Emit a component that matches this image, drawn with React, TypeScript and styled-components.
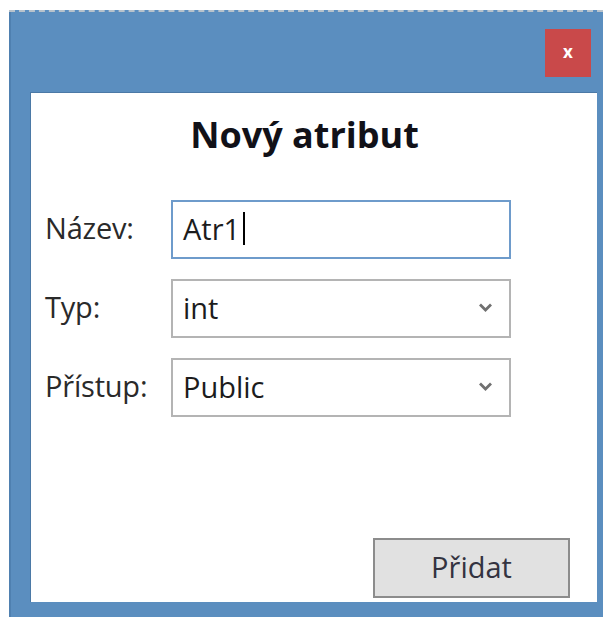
import React from "react";
import styled, { createGlobalStyle } from "styled-components";

const GlobalStyle = createGlobalStyle`
  html, body {
    margin: 0;
    padding: 0;
    background: #ffffff;
  }
  body {
    font-family: "Open Sans", "Noto Sans", sans-serif;
    width: 603px;
    height: 617px;
    overflow: hidden;
  }
`;

const Page = styled.div`
  width: 603px;
  height: 617px;
  padding-top: 10px;
  box-sizing: border-box;
`;

const Window = styled.div`
  margin-left: 9px;
  width: 594px;
  height: 607px;
  box-sizing: border-box;
  background: #5b8ebf;
  border-top: 2px dashed #b9c3cc;
  box-shadow: inset 2px 0 0 #4f80b0;
  display: flex;
  flex-direction: column;
  padding: 0 6px 15px 21px;
`;

const TitleBar = styled.div`
  height: 80px;
  display: flex;
  align-items: flex-start;
  justify-content: flex-end;
  padding-top: 17px;
  padding-right: 6px;
  box-sizing: border-box;
`;

const CloseButton = styled.button`
  width: 46px;
  height: 48px;
  border: none;
  background: #c9494a;
  color: #ffffff;
  font-family: "Open Sans", sans-serif;
  font-weight: 700;
  font-size: 17px;
  line-height: 1;
  padding: 0 0 3px;
  cursor: pointer;
`;

const Panel = styled.div`
  flex: 1;
  background: #ffffff;
  border-top: 1px solid #4b79a6;
  border-left: 1px solid #4b79a6;
  display: flex;
  flex-direction: column;
  box-sizing: border-box;
  padding: 18px 27px 4px 14px;
`;

const Heading = styled.h1`
  margin: 0 0 41px;
  font-family: "Open Sans", sans-serif;
  font-weight: 700;
  font-size: 36px;
  line-height: 48px;
  color: #111118;
  text-align: center;
  padding-right: 6px;
`;

const Form = styled.div`
  display: grid;
  grid-template-columns: 126px 340px;
  grid-auto-rows: 59px;
  row-gap: 20px;
  align-items: center;
`;

const Label = styled.label`
  font-size: 29px;
  color: #2a2a2a;
  letter-spacing: -0.2px;
  padding-bottom: 4px;
`;

const Field = styled.div<{ $focused?: boolean }>`
  height: 59px;
  box-sizing: border-box;
  border: 2px solid ${(p) => (p.$focused ? "#6e9bcb" : "#b4b4b4")};
  background: #ffffff;
  display: flex;
  align-items: center;
  padding: 0 16px 3px 10px;
  font-size: 29px;
  color: #1c1c1c;
`;

const Value = styled.span`
  flex: 1;
  display: flex;
  align-items: center;
`;

const Caret = styled.span`
  display: inline-block;
  width: 2px;
  height: 33px;
  background: #000000;
  margin-left: 3px;
`;

const Footer = styled.div`
  margin-top: auto;
  display: flex;
  justify-content: flex-end;
`;

const SubmitButton = styled.button`
  width: 197px;
  height: 60px;
  box-sizing: border-box;
  border: 2px solid #8c8c8c;
  background: #e1e1e1;
  font-family: "Open Sans", sans-serif;
  font-size: 29px;
  color: #333340;
  padding: 0 0 4px;
`;

const Chevron = () => (
  <svg width="15" height="11" viewBox="0 0 15 11">
    <path d="M2 2.5 L7.5 8 L13 2.5" fill="none" stroke="#707070" strokeWidth="2.8" />
  </svg>
);

export default function App() {
  return (
    <>
      <GlobalStyle />
      <Page>
        <Window>
          <TitleBar>
            <CloseButton aria-label="Zavřít">x</CloseButton>
          </TitleBar>
          <Panel>
            <Heading>Nový atribut</Heading>
            <Form>
              <Label>Název:</Label>
              <Field $focused>
                <Value>
                  Atr1
                  <Caret />
                </Value>
              </Field>
              <Label>Typ:</Label>
              <Field>
                <Value>int</Value>
                <Chevron />
              </Field>
              <Label>Přístup:</Label>
              <Field>
                <Value>Public</Value>
                <Chevron />
              </Field>
            </Form>
            <Footer>
              <SubmitButton>Přidat</SubmitButton>
            </Footer>
          </Panel>
        </Window>
      </Page>
    </>
  );
}
